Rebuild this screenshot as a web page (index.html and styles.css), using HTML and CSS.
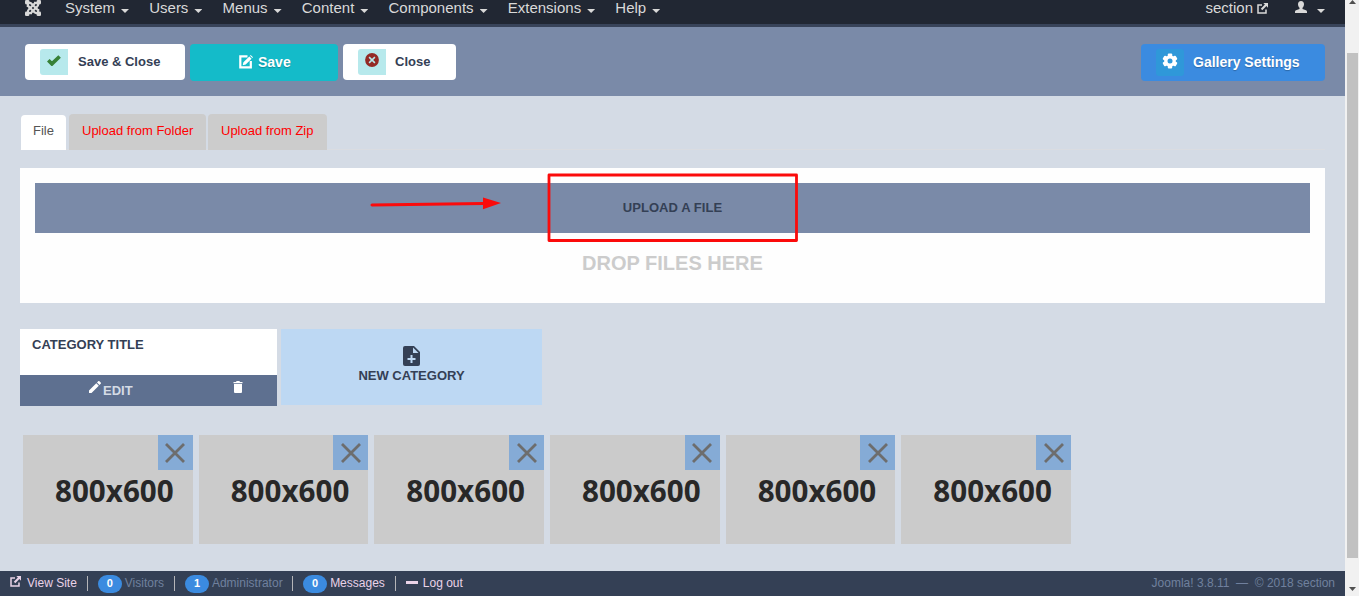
FILE: index.html
```html
<!DOCTYPE html>
<html lang="en">
<head>
<meta charset="utf-8">
<title>Gallery</title>
<link rel="stylesheet" href="styles.css">
</head>
<body>
<svg width="0" height="0" class="defs">
  <symbol id="ext" viewBox="0 0 11 11"><path d="M5 2H1v8h8V6.500" fill="none" stroke="currentColor" stroke-width="1.500"/><path d="M6.300 0H11v4.700L9.400 3.100 5.300 7.200 3.800 5.700 7.900 1.600z" fill="currentColor"/></symbol>
  <symbol id="x" viewBox="0 0 20 20"><path d="M1 1l18 18M19 1L1 19" stroke="currentColor" stroke-width="2.800"/></symbol>
</svg>
<div class="screen">
<div class="page">
  <nav class="nav">
    <svg class="joomla" width="18" height="18" viewBox="0 0 18 18"><g fill="none" stroke="currentColor" stroke-width="2.200"><path d="M3.800 8V6.500c0-3 2.200-3.300 4-1.500l6.400 6.400"/><path d="M10 3.800h1.500c3 0 3.300 2.200 1.500 4l-6.400 6.400"/><path d="M14.200 10v1.500c0 3-2.200 3.300-4 1.500L3.800 6.600"/><path d="M8 14.200H6.500c-3 0-3.300-2.200-1.500-4l6.400-6.400"/></g><g fill="currentColor"><rect x="1" y="1" width="4.400" height="4.400" rx="1.300"/><rect x="12.600" y="1" width="4.400" height="4.400" rx="1.300"/><rect x="1" y="12.600" width="4.400" height="4.400" rx="1.300"/><rect x="12.600" y="12.600" width="4.400" height="4.400" rx="1.300"/></g></svg>
    <a class="item">System<i class="caret"></i></a>
    <a class="item">Users<i class="caret"></i></a>
    <a class="item">Menus<i class="caret"></i></a>
    <a class="item">Content<i class="caret"></i></a>
    <a class="item">Components<i class="caret"></i></a>
    <a class="item">Extensions<i class="caret"></i></a>
    <a class="item">Help<i class="caret"></i></a>
    <a class="site">section <svg width="11" height="11"><use href="#ext"/></svg></a>
    <a class="user"><svg width="12" height="12" viewBox="0 0 12 12"><path d="M6 0c2 0 3 1.300 3 3.200 0 1.600-.7 2.800-1.500 3.500v1.200L11 9.300c.7.300 1 .8 1 1.700v1H0v-1c0-.9.300-1.400 1-1.700l3.500-1.400V6.700C3.700 6 3 4.800 3 3.200 3 1.300 4 0 6 0z" fill="currentColor"/></svg><i class="caret"></i></a>
  </nav>
  <header class="toolbar">
    <button class="btn white saveclose"><span class="tile"><svg width="14" height="11" viewBox="0 0 14 11"><path d="M1.300 5.300l3.600 3.600L12.600 1.500" fill="none" stroke="#378137" stroke-width="3.700"/></svg></span><span class="label">Save &amp; Close</span></button>
    <button class="btn teal"><svg width="14" height="14" viewBox="0 0 14 14"><path d="M8.500 1.300H1.300v11h10.500V6" fill="none" stroke="#fff" stroke-width="2.200"/><path d="M3.700 10.300l.7-3L10.300 1.400l2.300 2.300-5.900 5.900zM11 .7l.7-.7L14 2.300l-.7.700z" fill="#fff"/></svg><span class="label">Save</span></button>
    <button class="btn white close"><span class="tile"><svg width="14" height="14" viewBox="0 0 14 14"><circle cx="7" cy="7" r="6.900" fill="#942a25"/><path d="M4.100 4.100l5.800 5.800M9.900 4.100L4.100 9.900" stroke="#b7e9ec" stroke-width="1.500"/></svg></span><span class="label">Close</span></button>
    <button class="btn blue"><span class="tile"><svg width="16" height="16" viewBox="0 0 16 16"><g fill="#fff"><circle cx="8" cy="8" r="5.800"/><rect id="tooth" x="5.800" y=".5" width="4.400" height="15" rx="1"/><use href="#tooth" transform="rotate(60 8 8)"/><use href="#tooth" transform="rotate(120 8 8)"/></g><circle cx="8" cy="8" r="2.500" fill="#2f98d9"/></svg></span><span class="label">Gallery Settings</span></button>
  </header>
  <main class="main">
    <div class="tabs"><a class="tab active">File</a><a class="tab folder">Upload from Folder</a><a class="tab zip">Upload from Zip</a></div>
    <section class="upload">
      <div class="uploadbar">UPLOAD A FILE</div>
      <div class="drop">DROP FILES HERE</div>
      <svg class="marks" width="1305" height="135" viewBox="20 168 1305 135"><rect x="549" y="175" width="247.500" height="65.500" fill="none" stroke="#fb0b0b" stroke-width="2.800" stroke-linejoin="round"/><path d="M372 205l112-1.500" stroke="#fb0b0b" stroke-width="3" stroke-linecap="round"/><path d="M483 197.500l18 5.500-18 6.200z" fill="#fb0b0b"/></svg>
    </section>
    <section class="cats">
      <article class="cat">
        <h3>CATEGORY TITLE</h3>
        <div class="actions">
          <a class="edit"><svg width="12" height="12" viewBox="0 0 12 12"><path d="M0 9.500L7.300 2.200l2.500 2.500L2.500 12H0zM8 1.500L9.200.3c.4-.4.900-.4 1.200 0l1.300 1.300c.4.400.4.900 0 1.200L10.500 4z" fill="#fff"/></svg><span>EDIT</span></a>
          <svg class="trash" width="10" height="12" viewBox="0 0 10 12"><path d="M.5 1H3l.6-1h2.800L7 1h2.500v1.200h-9zM1 3h8v8q0 1-1 1H2q-1 0-1-1z" fill="#fff"/></svg>
        </div>
      </article>
      <article class="new"><svg width="17" height="20" viewBox="0 0 17 20"><path d="M2 0h9l6 6v12q0 2-2 2H2q-2 0-2-2V2Q0 0 2 0z" fill="#344055"/><path d="M10 1.500L15.500 7H10z" fill="#bdd8f3"/><path d="M8.500 9v8M4.500 13h8" stroke="#bdd8f3" stroke-width="2"/></svg><span>NEW CATEGORY</span></article>
    </section>
    <section class="grid">
      <figure class="thumb"><span>800x600</span><b class="del"><svg width="20" height="20"><use href="#x"/></svg></b></figure>
      <figure class="thumb"><span>800x600</span><b class="del"><svg width="20" height="20"><use href="#x"/></svg></b></figure>
      <figure class="thumb"><span>800x600</span><b class="del"><svg width="20" height="20"><use href="#x"/></svg></b></figure>
      <figure class="thumb"><span>800x600</span><b class="del"><svg width="20" height="20"><use href="#x"/></svg></b></figure>
      <figure class="thumb"><span>800x600</span><b class="del"><svg width="20" height="20"><use href="#x"/></svg></b></figure>
      <figure class="thumb"><span>800x600</span><b class="del"><svg width="20" height="20"><use href="#x"/></svg></b></figure>
    </section>
  </main>
  <footer class="status">
    <a class="stat view"><svg width="11" height="11"><use href="#ext"/></svg>View Site</a>
    <span class="stat visitors"><b class="badge">0</b>Visitors</span>
    <span class="stat admin"><b class="badge">1</b>Administrator</span>
    <a class="stat messages"><b class="badge">0</b>Messages</a>
    <a class="stat logout"><i class="dash"></i>Log out</a>
    <span class="copy">Joomla! 3.8.11 &nbsp;—&nbsp; © 2018 section</span>
  </footer>
</div>
<aside class="scroll"><i class="up"></i><i class="thumbbar"></i><i class="down"></i></aside>
</div>
</body>
</html>
```
FILE: styles.css
```css
* { box-sizing: border-box; }
body { margin: 0; font-family: "Liberation Sans", Arial, sans-serif; font-size: 13px; overflow: hidden; }
svg { display: block; flex: none; }
.defs { position: absolute; }
.screen { display: flex; width: 1359px; height: 596px; }
.page { width: 1345px; display: flex; flex-direction: column; background: #d4dbe5; }

.nav { height: 27px; background: #212733; border-bottom: 3px solid #384359; color: #d9d9d9; display: flex; align-items: flex-start; padding: 0 20px 0 24px; font-size: 15px; line-height: 16px; }
.joomla { margin: -1px 23px 0 0; }
.item { display: flex; margin-right: 20.200px; }
.caret { width: 8px; height: 4px; margin: 9px 0 0 6px; background: #d9d9d9; clip-path: polygon(0 0, 100% 0, 50% 100%); }
.site { display: flex; margin-left: auto; gap: 4px; }
.site svg { margin-top: 3px; }
.user { display: flex; margin-left: 27px; }
.user svg { margin-top: 1px; }
.user .caret { margin-left: 10px; }

.toolbar { height: 69px; background: #7a8aa8; display: flex; align-items: flex-start; padding: 17px 20px 0 25px; }
.btn { border: 0; padding: 0; border-radius: 4px; display: flex; align-items: center; font: bold 13px "Liberation Sans", Arial, sans-serif; height: 36px; color: #344055; }
.label { padding-bottom: 2px; }
.white { background: #fff; padding-left: 15px; }
.saveclose { width: 160px; }
.close { width: 113px; margin-left: 5px; }
.close .tile { margin-right: 9px; }
.tile { width: 28px; height: 26px; background: #b7e9ec; border-radius: 3px 0 0 3px; margin-right: 10px; display: flex; justify-content: center; padding-top: 6px; }
.close .tile { padding-top: 4px; }
.teal, .blue { height: 37px; color: #fff; font-size: 14px; text-shadow: 0 1px 1px rgba(0, 0, 0, .25); }
.teal { width: 148px; background: #14bbc9; margin-left: 5px; padding-left: 49px; gap: 5px; }
.teal svg { margin-top: -2px; }
.blue { width: 184px; background: #3b8be0; margin-left: auto; padding-left: 15px; }
.blue .tile { background: #2f98d9; height: 27px; padding-top: 4px; border-radius: 3px; margin-right: 9px; }

.main { height: 475px; padding: 18px 20px 0; }
.tabs { display: flex; height: 36px; padding-left: 1px; border-bottom: 1px solid #dadce1; }
.tab { height: 36px; padding: 8px 0 0 13px; line-height: 18px; background: #ccc; color: #f00; border-radius: 4px 4px 0 0; }
.tab.active { background: #fff; color: #555; width: 45px; height: 35px; margin: 1px 3px 0 0; padding: 7px 0 0 12px; }
.folder { width: 137px; margin-right: 2px; }
.zip { width: 119px; }
.upload { position: relative; height: 135px; margin-top: 18px; background: #fefefe; padding: 15px; text-align: center; font-weight: bold; }
.uploadbar { height: 50px; line-height: 49px; background: #7a8aa8; color: #344055; letter-spacing: .05px; }
.drop { font-size: 20px; line-height: 24px; margin-top: 18px; color: #ccc; }
.marks { position: absolute; left: 0; top: 0; }

.cats { display: flex; gap: 4px; margin-top: 26px; height: 77px; font-weight: bold; color: #344055; }
.cat { width: 257px; background: #fff; display: flex; flex-direction: column; }
.cat h3 { margin: 0; height: 46px; padding: 7px 12px; font-size: 13px; line-height: 18px; }
.actions { height: 31px; background: #5e7090; display: flex; padding-left: 69px; }
.edit { display: flex; width: 144px; gap: 2px; color: #d4dbe5; line-height: 18px; padding-top: 6px; }
.edit span { margin-top: 1px; }
.trash { margin: 6px 0 0 0; }
.new { width: 261px; height: 76px; background: #bdd8f3; display: flex; flex-direction: column; align-items: center; padding-top: 17px; line-height: 20px; }

.grid { display: flex; gap: 5.860px; margin-top: 29px; padding-left: 3px; }
.thumb { position: relative; width: 169.800px; height: 109px; margin: 0; padding-left: 32px; background: #cbcbcb; color: #282828; font: bold 29.600px/112px "Noto Sans", "Open Sans", sans-serif; }
.del { position: absolute; right: 0; top: 0; width: 35px; height: 35px; background: #85abd6; color: #6d6d6d; display: flex; align-items: center; justify-content: center; }

.status { height: 25px; background: #344055; color: #ead3e8; display: flex; align-items: flex-start; padding: 5px 10px 0; font-size: 12px; line-height: 14px; white-space: nowrap; }
.stat { height: 15px; display: flex; padding-right: 10px; border-right: 1px solid #b5b5b8; margin-right: 10px; }
.view svg { margin: 0 6px 0 0; }
.badge { width: 24px; height: 18px; margin: -1px 3px 0 0; border-radius: 9px; background: #3b8be0; color: #fff; font-size: 11px; line-height: 17px; text-align: center; }
.visitors, .admin { color: #70809e; }
.admin { padding-right: 9.500px; }
.logout { border: 0; }
.dash { width: 12px; height: 3px; margin: 5px 5px 0 0; background: #ead3e8; }
.copy { margin-left: auto; color: #70809e; }

.scroll { width: 14px; background: #f1f1f1; display: flex; flex-direction: column; align-items: center; padding: 0 1px 0 2px; }
.up { width: 7px; height: 4px; background: #505050; clip-path: polygon(50% 0, 100% 100%, 0 100%); }
.thumbbar { width: 11px; height: 505px; margin-top: 49px; background: #c1c1c1; }
.down { width: 7px; height: 4px; margin-top: 29px; background: #505050; clip-path: polygon(0 0, 100% 0, 50% 100%); }
```
